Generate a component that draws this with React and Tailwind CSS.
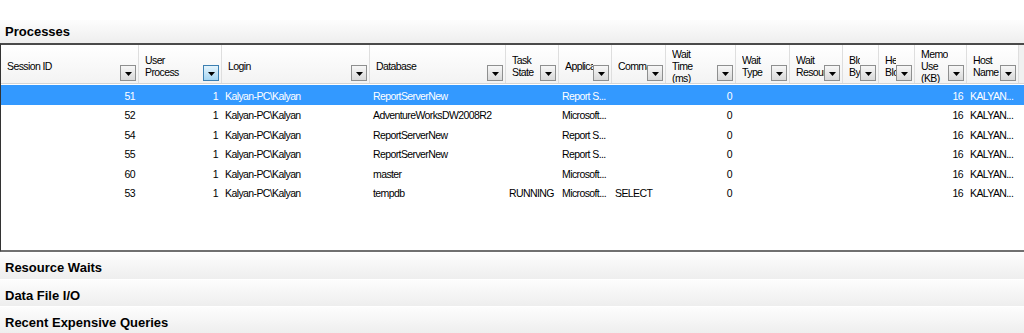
const columns = [
  { key: "sid", lines: ["Session ID"], w: 138, align: "right" },
  { key: "up", lines: ["User", "Process"], w: 83, align: "right", active: true },
  { key: "login", lines: ["Login"], w: 148 },
  { key: "db", lines: ["Database"], w: 136 },
  { key: "task", lines: ["Task", "State"], w: 53 },
  { key: "app", lines: ["Application"], w: 53 },
  { key: "cmd", lines: ["Command"], w: 54 },
  { key: "wt", lines: ["Wait", "Time", "(ms)"], w: 70, align: "right" },
  { key: "wtype", lines: ["Wait", "Type"], w: 54 },
  { key: "wres", lines: ["Wait", "Resource"], w: 53 },
  { key: "bb", lines: ["Blocked", "By"], w: 36 },
  { key: "hb", lines: ["Head", "Blocker"], w: 36 },
  { key: "mem", lines: ["Memory", "Use", "(KB)"], w: 52, align: "right" },
  { key: "host", lines: ["Host", "Name"], w: 52 },
];

const rows = [
  { sid: "51", up: "1", login: "Kalyan-PC\\Kalyan", db: "ReportServerNew", app: "Report S...", wt: "0", mem: "16", host: "KALYAN...", selected: true },
  { sid: "52", up: "1", login: "Kalyan-PC\\Kalyan", db: "AdventureWorksDW2008R2", app: "Microsoft...", wt: "0", mem: "16", host: "KALYAN..." },
  { sid: "54", up: "1", login: "Kalyan-PC\\Kalyan", db: "ReportServerNew", app: "Report S...", wt: "0", mem: "16", host: "KALYAN..." },
  { sid: "55", up: "1", login: "Kalyan-PC\\Kalyan", db: "ReportServerNew", app: "Report S...", wt: "0", mem: "16", host: "KALYAN..." },
  { sid: "60", up: "1", login: "Kalyan-PC\\Kalyan", db: "master", app: "Microsoft...", wt: "0", mem: "16", host: "KALYAN..." },
  { sid: "53", up: "1", login: "Kalyan-PC\\Kalyan", db: "tempdb", task: "RUNNING", app: "Microsoft...", cmd: "SELECT", wt: "0", mem: "16", host: "KALYAN..." },
];

const FilterButton = ({ active }) => (
  <div
    className={
      active
        ? "shrink-0 w-4 h-4 border border-[#3c7fb1] bg-gradient-to-b from-[#e5f4fc] to-[#a4d5f2] flex items-center justify-center"
        : "shrink-0 w-4 h-4 border border-[#8e8f8f] bg-gradient-to-b from-[#f7f7f7] to-[#d9d9d9] flex items-center justify-center"
    }
  >
    <svg width="7" height="4" viewBox="0 0 7 4" className="mt-[2px]">
      <polygon points="0,0 7,0 3.5,4" fill="#000" />
    </svg>
  </div>
);

const SectionBar = ({ title, className = "" }) => (
  <div className={"flex items-center pl-[5px] bg-gradient-to-b from-[#fdfdfd] to-[#eeeeee] " + className}>
    <span className="text-[13px] font-bold text-black">{title}</span>
  </div>
);

export default function App() {
  return (
    <div
      className="w-[1024px] h-[333px] bg-white overflow-hidden flex flex-col"
      style={{ fontFamily: '"Liberation Sans", Arial, sans-serif' }}
    >
      <div className="h-[20px] shrink-0" />
      <SectionBar title="Processes" className="h-[23px] shrink-0" />

      {/* Grid */}
      <div className="h-[209px] shrink-0 border-t-2 border-t-[#4a4a4a] border-l border-l-[#333] border-b-2 border-b-[#707070] flex flex-col text-[10.5px] tracking-[-0.6px] text-black">
        {/* Header */}
        <div className="h-[39px] shrink-0 flex bg-gradient-to-b from-white to-[#f3f3f3] border-b border-[#d5d5d5]">
          {columns.map((c) => (
            <div
              key={c.key}
              style={{ width: c.w }}
              className="shrink-0 flex items-end pl-[6px] pr-[2px] pb-[2px] border-r border-[#dedede] overflow-hidden"
            >
              <div className="flex-1 min-w-0 self-center mt-[5px] flex flex-col leading-[12px]">
                {c.lines.map((l) => (
                  <div key={l} className="overflow-hidden whitespace-nowrap">
                    {l}
                  </div>
                ))}
              </div>
              <FilterButton active={c.active} />
            </div>
          ))}
          <div className="flex-1 bg-[#f0f0f0]" />
        </div>

        {/* Rows */}
        <div className="mt-px flex flex-col">
          {rows.map((r) => (
            <div
              key={r.sid}
              className={"h-[19.5px] pt-[4px] flex items-center " + (r.selected ? "bg-[#3399ff] text-white" : "")}
            >
              {columns.map((c) => (
                <div
                  key={c.key}
                  style={{ width: c.w }}
                  className={
                    "shrink-0 overflow-hidden whitespace-nowrap " +
                    (c.align === "right" ? "text-right pr-[4px]" : "pl-[3px]")
                  }
                >
                  {r[c.key] || ""}
                </div>
              ))}
              <div className="flex-1" />
            </div>
          ))}
        </div>
      </div>

      <SectionBar title="Resource Waits" className="mt-px h-[26px] pt-[4px] shrink-0" />
      <SectionBar title="Data File I/O" className="mt-px h-[26px] pt-[5px] shrink-0" />
      <SectionBar title="Recent Expensive Queries" className="mt-px h-[26px] pt-[5px] shrink-0" />
    </div>
  );
}
